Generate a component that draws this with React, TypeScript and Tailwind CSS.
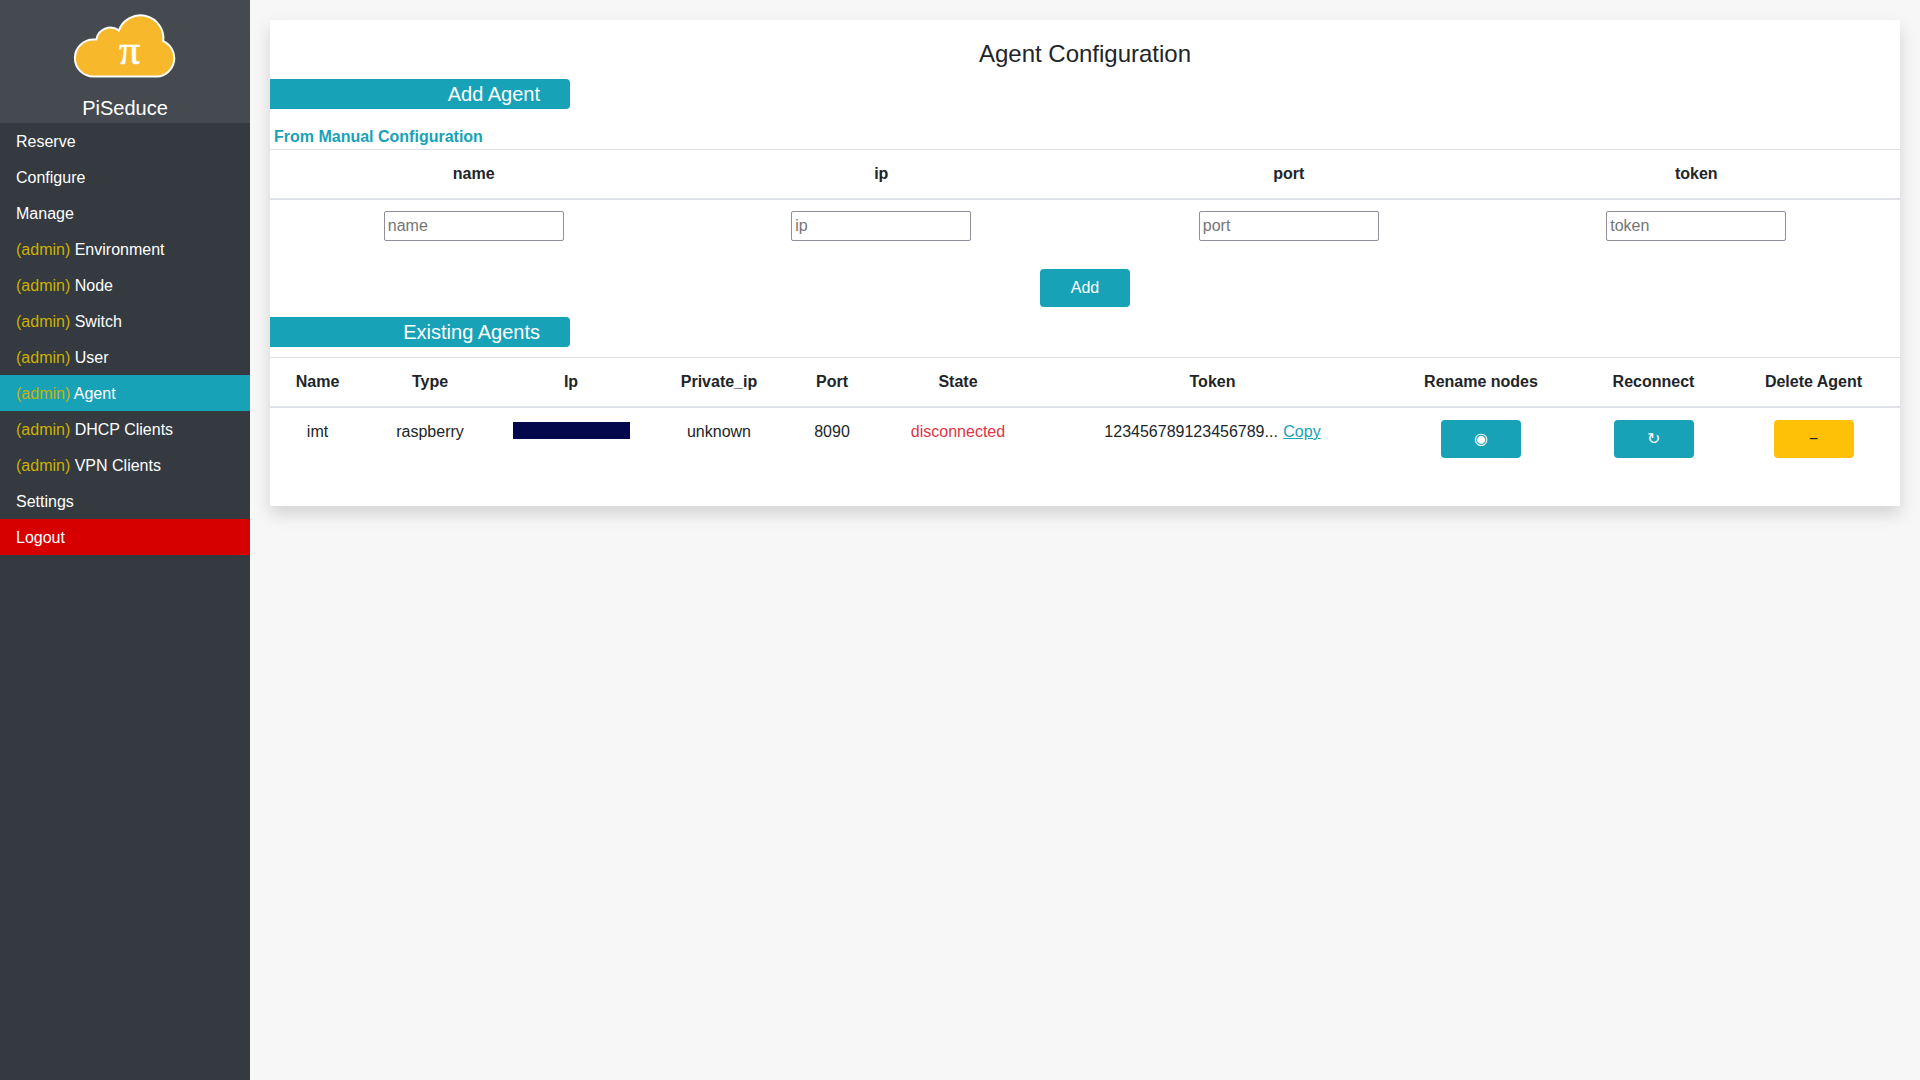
import React from "react";

const navItems = [
  { label: "Reserve" },
  { label: "Configure" },
  { label: "Manage" },
  { label: "Environment", admin: true },
  { label: "Node", admin: true },
  { label: "Switch", admin: true },
  { label: "User", admin: true },
  { label: "Agent", admin: true, active: true },
  { label: "DHCP Clients", admin: true },
  { label: "VPN Clients", admin: true },
  { label: "Settings" },
  { label: "Logout", danger: true },
];

const fields = ["name", "ip", "port", "token"];

const columns = [
  { label: "Name", width: "w-[95px]" },
  { label: "Type", width: "w-[130px]" },
  { label: "Ip", width: "w-[152px]" },
  { label: "Private_ip", width: "w-[144px]" },
  { label: "Port", width: "w-[82px]" },
  { label: "State", width: "w-[170px]" },
  { label: "Token", width: "" },
  { label: "Rename nodes", width: "w-[198px]" },
  { label: "Reconnect", width: "w-[147px]" },
  { label: "Delete Agent", width: "w-[173px]" },
];

function CloudLogo() {
  return (
    <svg className="h-[65px] w-[104px]" viewBox="5 5 104 65" role="img" aria-label="PiSeduce logo">
      <path
        d="M25.500 68.600A18.600 18.600 0 0 1 25.500 31.400L28.300 31.400A14.300 14.300 0 0 1 50.800 22.400A23 23 0 0 1 95.200 33.200A18.500 18.500 0 0 1 89 68.600Z"
        fill="#f8b82b"
        stroke="#fff"
        strokeWidth="2"
        strokeLinejoin="miter"
      />
      <text
        x="61.500"
        y="55.500"
        textAnchor="middle"
        fill="#fff"
        stroke="#fff"
        strokeWidth="0.600"
        fontSize="42"
        fontFamily="Liberation Serif, serif"
      >
        π
      </text>
    </svg>
  );
}

function SectionTitle({ children }: { children: React.ReactNode }) {
  return (
    <h2 className="h-[30px] w-[300px] rounded-r bg-[#17a2b8] pr-[30px] text-right text-[20px] leading-[30px] text-white">
      {children}
    </h2>
  );
}

const th = "h-[51px] border-t border-b-2 border-[#dee2e6] px-3 text-center align-middle font-bold whitespace-nowrap";
const td = "px-3 py-3 text-center align-top whitespace-nowrap";
const btn = "h-[38px] w-20 rounded text-center align-top leading-6";

export default function App() {
  return (
    <div className="flex min-h-screen bg-[#f7f7f7] font-['Liberation_Sans',Arial,sans-serif] text-[16px] leading-6 text-[#212529]">
      <aside className="w-[250px] shrink-0 bg-[#343a40]">
        <div className="flex h-[123px] flex-col items-center bg-[#454a50] pt-[13px]">
          <CloudLogo />
          <a href="#" className="mt-[15px] text-[20px] leading-[30px] text-white">PiSeduce</a>
        </div>
        <nav>
          {navItems.map((item) => (
            <a
              key={item.label}
              href="#"
              className={`block h-9 px-4 pt-px leading-9 text-white ${item.active ? "bg-[#17a2b8]" : item.danger ? "bg-[#d60000]" : ""}`}
            >
              {item.admin && <span className="text-[#ccb100]">(admin) </span>}
              {item.label}
            </a>
          ))}
        </nav>
      </aside>

      <main className="min-w-0 flex-1 p-5">
        <section className="bg-white pt-5 pb-9 shadow-[0_8px_16px_rgba(0,0,0,0.15)]">
          <h1 className="mb-3 text-center text-[24px] leading-[27px]">Agent Configuration</h1>
          <SectionTitle>Add Agent</SectionTitle>
          <h3 className="mt-4 pl-1 font-bold text-[#17a2b8]">From Manual Configuration</h3>
          <form onSubmit={(e) => e.preventDefault()}>
            <table className="w-full table-fixed border-separate border-spacing-0">
              <thead>
                <tr>
                  {fields.map((f) => (
                    <th key={f} className={th}>
                      <label htmlFor={`agent-${f}`}>{f}</label>
                    </th>
                  ))}
                </tr>
              </thead>
              <tbody>
                <tr>
                  {fields.map((f) => (
                    <td key={f} className="px-3 pt-[11px] pb-3 text-center align-top">
                      <input
                        id={`agent-${f}`}
                        type="text"
                        placeholder={f}
                        className="h-[30px] w-[180px] rounded-[2px] border border-[#8f8f9d] bg-white px-[3px] align-top placeholder:text-[#757575]"
                      />
                    </td>
                  ))}
                </tr>
              </tbody>
            </table>
            <div className="mt-4 mb-[10px] flex justify-center">
              <button type="submit" className="h-[38px] w-[90px] rounded bg-[#17a2b8] text-white">Add</button>
            </div>
          </form>

          <SectionTitle>Existing Agents</SectionTitle>
          <table className="mt-[10px] w-full table-fixed border-separate border-spacing-0">
            <thead>
              <tr>
                {columns.map((c) => (
                  <th key={c.label} className={`${th} ${c.width}`}>{c.label}</th>
                ))}
              </tr>
            </thead>
            <tbody>
              <tr>
                <td className={td}>imt</td>
                <td className={td}>raspberry</td>
                <td className={td}>
                  <span className="mx-auto mt-[2px] block h-[17px] w-[117px] bg-[#02084b]" role="img" aria-label="Hidden address" />
                </td>
                <td className={td}>unknown</td>
                <td className={td}>8090</td>
                <td className={`${td} text-[#dc3545]`}>disconnected</td>
                <td className={td}>
                  123456789123456789... <a href="#" className="ml-px text-[#17a2b8] underline">Copy</a>
                </td>
                <td className={td}>
                  <button type="button" aria-label="Rename nodes" className={`${btn} bg-[#17a2b8] text-white`}>◉</button>
                </td>
                <td className={td}>
                  <button type="button" aria-label="Reconnect" className={`${btn} bg-[#17a2b8] text-white`}>↻</button>
                </td>
                <td className={td}>
                  <button type="button" aria-label="Delete agent" className={`${btn} bg-[#ffc107] text-[#212529]`}>−</button>
                </td>
              </tr>
            </tbody>
          </table>
        </section>
      </main>
    </div>
  );
}
